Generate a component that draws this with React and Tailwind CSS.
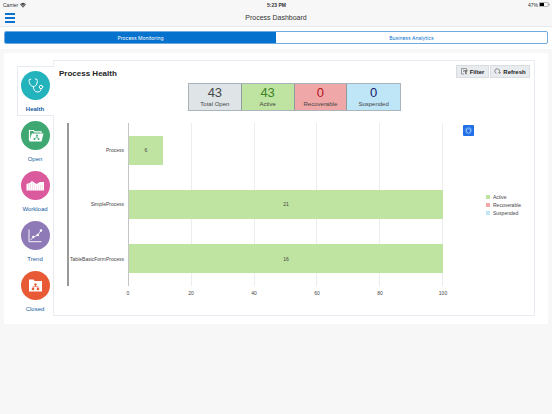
import React, { useState } from 'react';
import { Wifi } from 'lucide-react';

const StethoscopeIcon = () => (
    <svg viewBox="0 0 29 29" className="h-full w-full" fill="none" stroke="white" strokeWidth="1" strokeLinecap="round">
        <path d="M9.800 8.200 8.200 8.700c-.5 2.300 1 6.800 4.200 6.800s4.500-4.300 3.600-7l-1.700-.6" />
        <path d="M12.400 15.500c-.2 3.400 1.600 5.500 4.300 5.500 2.400 0 3.400-1.500 3.500-3.300" />
        <circle cx="20" cy="16" r="1.700" />
    </svg>
);

const OpenFolderIcon = () => (
    <svg viewBox="0 0 29 29" className="h-full w-full">
        <path d="M8.500 19.500V9.500h4l1 1.300h6.500V12" fill="none" stroke="white" strokeWidth="1.200" />
        <path d="M10.800 12.500h11.700l-2 8H8.300z" fill="white" />
        <path d="M16 14.500v1.500m0 0-2.200 1.500M16 16l1.500 1.500" stroke="#3fa872" strokeWidth=".7" fill="none" />
        <circle cx="16" cy="14.500" r=".9" fill="#3fa872" />
        <circle cx="13.500" cy="18" r="1" fill="#3fa872" />
        <circle cx="17.500" cy="18" r="1" fill="#3fa872" />
    </svg>
);

const WorkloadIcon = () => (
    <svg viewBox="0 0 29 29" className="h-full w-full">
        <path d="M5.500 19.500v-6.500l3-1 2.500-2 4.500 3 3.500-2h4v8.500z" fill="white" />
        <path d="M7.500 12.500v7m2-8v8m2-8v8m2-6v6m2-5v5m2-6v6m2-6v6m2-6v6" stroke="#db5a9d" strokeWidth=".2" />
    </svg>
);

const TrendIcon = () => (
    <svg viewBox="0 0 29 29" className="h-full w-full" fill="none" stroke="white" strokeWidth=".9">
        <path d="M8 8.500v12.200h12.500" />
        <path d="m9.500 19 2.800-3.000 4.500-2L20 9.500" strokeWidth=".8" />
        <g fill="white" stroke="none">
            <circle cx="12.300" cy="16" r="1.200" />
            <circle cx="16.800" cy="14" r="1.200" />
            <circle cx="20" cy="9.500" r="1.200" />
        </g>
    </svg>
);

const ClosedFolderIcon = () => (
    <svg viewBox="0 0 29 29" className="h-full w-full">
        <path d="M8 8.500h4.500l1 1.500H21v10.500H8z" fill="white" />
        <path d="M14.500 13.500v2m-2.500 2.500v-2.300h5v2.300" fill="none" stroke="#e85a36" strokeWidth=".7" />
        <circle cx="14.500" cy="13.500" r="1.200" fill="#e85a36" />
        <circle cx="12" cy="18" r="1.300" fill="#e85a36" />
        <circle cx="17" cy="18" r="1.300" fill="#e85a36" />
    </svg>
);

const sections = [
    { id: 'health', label: 'Health', color: 'bg-[#22b3bd]', icon: StethoscopeIcon },
    { id: 'open', label: 'Open', color: 'bg-[#3fa872]', icon: OpenFolderIcon },
    { id: 'workload', label: 'Workload', color: 'bg-[#db5a9d]', icon: WorkloadIcon },
    { id: 'trend', label: 'Trend', color: 'bg-[#8f7ab8]', icon: TrendIcon },
    { id: 'closed', label: 'Closed', color: 'bg-[#e85a36]', icon: ClosedFolderIcon },
];

const stats = [
    { label: 'Total Open', value: 43, box: 'bg-[#dfe4e7]', text: 'text-[#45494d]' },
    { label: 'Active', value: 43, box: 'bg-[#bfe3a0]', text: 'text-[#3d8426]' },
    { label: 'Recoverable', value: 0, box: 'bg-[#f0a7a8]', text: 'text-[#b3161b]' },
    { label: 'Suspended', value: 0, box: 'bg-[#bfe6f7]', text: 'text-[#16206b]' },
];

const bars = [
    { name: 'Process', count: 6, width: 10.700 },
    { name: 'SimpleProcess', count: 21, width: 100 },
    { name: 'TableBasicFormProcess', count: 16, width: 100 },
];

const ticks = [0, 20, 40, 60, 80, 100];

const legend = [
    { label: 'Active', color: 'bg-[#bfe3a0]' },
    { label: 'Recoverable', color: 'bg-[#f0a7a8]' },
    { label: 'Suspended', color: 'bg-[#bfe6f7]' },
];

const Header = () => (
    <header className="border-b border-[#e8e8e8] bg-[#f7f7f7]">
        <div className="grid h-[9px] grid-cols-3 items-center pr-[2px] pl-[3px] text-[5px] leading-[8px] text-[#333]">
            <div className="flex items-center gap-[2px]">
                Carrier
                <Wifi size={6} strokeWidth={4} />
            </div>
            <span className="text-center font-bold">5:23 PM</span>
            <div className="flex items-center justify-end gap-px">
                47%
                <svg width="11" height="5" viewBox="0 0 11 5">
                    <rect x=".3" y=".5" width="9" height="4" rx=".6" fill="none" stroke="#777" strokeWidth=".5" />
                    <rect x=".8" y="1" width="4.200" height="3" fill="#000" />
                    <path d="M10.200 1.800v1.400" stroke="#777" strokeWidth=".7" />
                </svg>
            </div>
        </div>
        <div className="grid h-[17px] grid-cols-3 items-center px-[5px]">
            <button type="button" aria-label="Menu" className="flex w-[10px] flex-col gap-[2px]">
                <span className="h-[2px] w-full bg-[#0b72cf]" />
                <span className="h-[2px] w-full bg-[#0b72cf]" />
                <span className="h-[2px] w-full bg-[#0b72cf]" />
            </button>
            <h1 className="text-center text-[7px] leading-[8px] text-[#333]">Process Dashboard</h1>
        </div>
    </header>
);

const BarChart = () => (
    <div className="mt-3 flex pl-[13px]">
        <div className="h-[163px] border-l-2 border-[#999]" />
        <div className="grid h-[163px] w-[59px] grid-rows-3 items-center pr-1 text-right">
            {bars.map(bar => (
                <span key={bar.name}>{bar.name}</span>
            ))}
        </div>
        <div className="flex-1">
            <div className="relative h-[163px]">
                <div className="absolute inset-0 flex justify-between">
                    {ticks.map(tick => (
                        <div key={tick} className="w-0 border-l border-[#eceeee] first:border-[#c4c4c4]" />
                    ))}
                </div>
                <div className="relative grid h-full grid-rows-3 items-center pl-px">
                    {bars.map(bar => (
                        <div
                            key={bar.name}
                            className="flex h-[29px] items-center justify-center bg-[#bfe3a0]"
                            style={{ width: `${bar.width}%` }}
                        >
                            {bar.count}
                        </div>
                    ))}
                </div>
            </div>
            <div className="mt-[3px] flex justify-between">
                {ticks.map(tick => (
                    <span key={tick} className="flex w-0 justify-center">{tick}</span>
                ))}
            </div>
        </div>
        <div className="w-[91px]">
            <button type="button" aria-label="Chart options" className="mt-[2px] ml-5 block">
                <svg width="11" height="11" viewBox="0 0 11 11">
                    <rect width="11" height="11" rx="1" fill="#236fe5" />
                    <path d="M3.200 3.800h4.600M3.300 4l.4 3.200 1.800 1.200 1.800-1.200.4-3.200" fill="none" stroke="#a9d2ff" strokeWidth=".8" />
                    <circle cx="5.500" cy="5.500" r="3.200" fill="none" stroke="#7db6fb" strokeWidth=".7" strokeDasharray="1.500 .7" />
                </svg>
            </button>
            <ul className="mt-[57px] ml-[43px]">
                {legend.map(item => (
                    <li key={item.label} className="flex items-center gap-[3px]">
                        <span className={`h-1 w-1 ${item.color}`} />
                        {item.label}
                    </li>
                ))}
            </ul>
        </div>
    </div>
);

const App = () => {
    const [section, setSection] = useState('health');

    return (
        <div className="min-h-screen bg-[#f7f7f7] font-['Liberation_Sans',sans-serif] text-[5px] leading-[8px] text-[#444]">
            <Header />

            {/* Dashboard switcher */}
            <nav className="bg-white px-1 pt-1 pb-[5px]">
                <div className="grid h-[13px] grid-cols-2 overflow-hidden rounded-[2px] border border-[#70a9dd] font-['Inter',sans-serif]">
                    <button type="button" className="bg-[#0572ce] text-white">Process Monitoring</button>
                    <button type="button" className="text-[#0572ce]">Business Analytics</button>
                </div>
            </nav>

            <main className="mx-1 mt-1 flex bg-white pt-[7px] pr-[13px] pb-2 pl-[13px]">
                {/* Section tabs */}
                <div className="z-10 mt-[6px] -mr-px w-[37px]">
                    {sections.map(({ id, label, color, icon: Icon }) => (
                        <button
                            key={id}
                            type="button"
                            onClick={() => setSection(id)}
                            className={`flex h-[50px] w-full flex-col items-center gap-[5px] border border-r-0 pt-1 pr-[2px] text-[6px] text-[#145c9e] ${
                                section === id ? 'border-[#e6ebf2] bg-white font-bold' : 'border-transparent'
                            }`}
                        >
                            <span className={`h-[29px] w-[29px] rounded-full ${color}`}>
                                <Icon />
                            </span>
                            {label}
                        </button>
                    ))}
                </div>

                <section className="flex-1 rounded-[1px] border border-[#e8ebf2] pb-[18px]">
                    <div className="flex items-center pt-1 pr-1 pl-[5px]">
                        <h2 className="flex-1 pt-1 text-[8px] font-bold text-[#222]">Process Health</h2>
                        <div className="flex gap-px text-[6px] font-bold text-[#222]">
                            <button type="button" className="flex h-[13px] w-[33px] items-center justify-center gap-[2px] border border-[#d9dde1] bg-[#e9ecef]">
                                <svg width="7" height="7" viewBox="0 0 7 7" fill="none" stroke="#666" strokeWidth=".6">
                                    <path d="M3 6H.5V.5h5V2M2 2h1M2 3.500h1" />
                                    <path d="M3.200 2.500h3.300L5.200 4v2.300l-.7-.5V4z" fill="#666" />
                                </svg>
                                Filter
                            </button>
                            <button type="button" className="flex h-[13px] w-10 items-center justify-center gap-[2px] border border-[#d9dde1] bg-[#e9ecef]">
                                <svg width="7" height="7" viewBox="0 0 7 7" fill="none" stroke="#666" strokeWidth=".7">
                                    <path d="M2.500 5.500A2.400 2.400 0 1 1 5.600 3.300V5" />
                                    <path d="M4.300 4.200 5.600 5.600 6.800 4.200" />
                                </svg>
                                Refresh
                            </button>
                        </div>
                    </div>

                    {/* Totals */}
                    <div className="mt-[5px] flex pl-[134px]">
                        <div className="grid h-[28px] w-[213px] grid-cols-4 divide-x divide-[#8f9c9f] border border-[#a9b5ba]">
                            {stats.map(stat => (
                                <div key={stat.label} className={`flex flex-col items-center justify-center ${stat.box}`}>
                                    <span className={`text-[13px] leading-[14px] ${stat.text}`}>{stat.value}</span>
                                    <span className="text-[6px]">{stat.label}</span>
                                </div>
                            ))}
                        </div>
                    </div>

                    <BarChart />
                </section>
            </main>
        </div>
    );
};

export default App;
